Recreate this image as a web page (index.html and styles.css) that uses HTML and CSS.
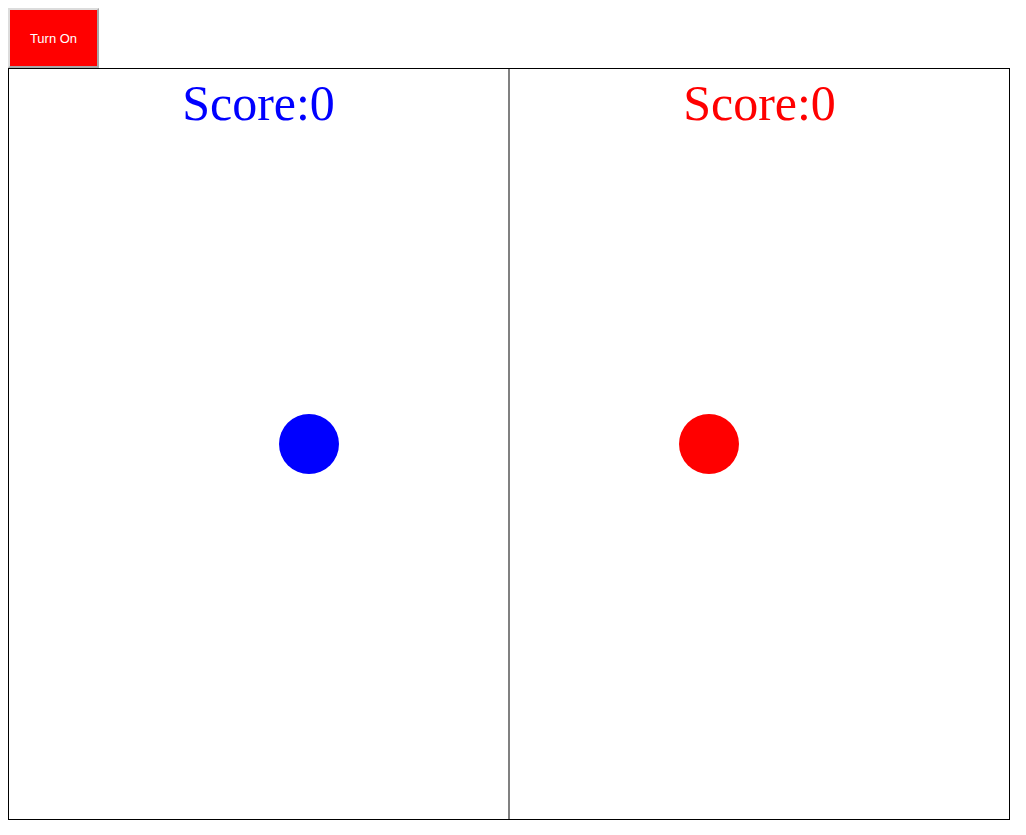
FILE: index.html
```html
<!DOCTYPE html>
<html>
<head>
    <title>Score</title>
    <link rel="stylesheet" href="styles.css">
</head>
<body>
    <button class="toggle">Turn On</button>
    <div class="board">
        <div class="half">
            <div class="score score-blue">Score:0</div>
            <div class="ball ball-blue"></div>
        </div>
        <div class="divider"></div>
        <div class="half">
            <div class="score score-red">Score:0</div>
            <div class="ball ball-red"></div>
        </div>
    </div>
</body>
</html>
```

FILE: styles.css
```css
body {
    margin: 8px;
    background-color: #ffffff;
}
.toggle {
    display: block;
    width: 91px;
    height: 60px;
    margin: 0;
    padding: 0;
    background-color: #ff0000;
    color: #ffffff;
    border: 2px solid;
    border-color: #dcdcdc #a6a6a6 #a6a6a6 #dcdcdc;
    font-family: "Liberation Sans", Arial, sans-serif;
    font-size: 13px;
}
.board {
    display: flex;
    width: 1000px;
    height: 750px;
    border: 1px solid #000000;
}
.half {
    position: relative;
    width: 499px;
    flex: none;
}
.divider {
    width: 2px;
    flex: none;
    background-color: #808080;
}
.score {
    padding-top: 5px;
    text-align: center;
    font-family: "Liberation Serif", "Times New Roman", serif;
    font-size: 50px;
}
.score-blue {
    color: #0000ff;
}
.score-red {
    color: #ff0000;
}
.ball {
    position: absolute;
    top: 345px;
    width: 60px;
    height: 60px;
    border-radius: 50%;
}
.ball-blue {
    left: 270px;
    background-color: #0000ff;
}
.ball-red {
    left: 169px;
    background-color: #ff0000;
}
```
